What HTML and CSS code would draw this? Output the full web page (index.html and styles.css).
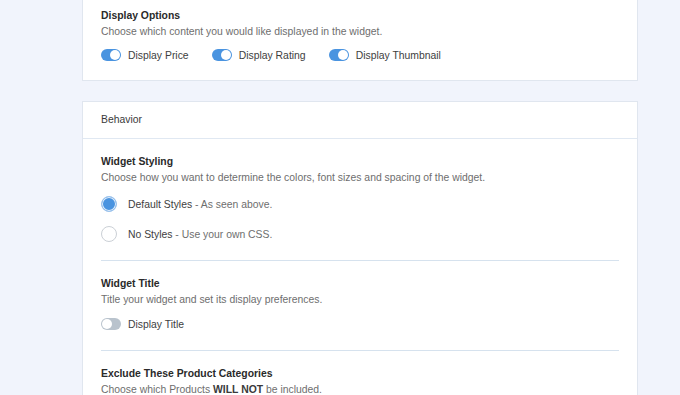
FILE: index.html
```html
<!DOCTYPE html>
<html>
<head>
<meta charset="utf-8">
<link rel="stylesheet" href="styles.css">
</head>
<body>
<div class="page">
  <div class="card card-first">
    <div class="section section-top">
      <div class="title">Display Options</div>
      <div class="desc">Choose which content you would like displayed in the widget.</div>
      <div class="toggles">
        <label class="opt"><span class="toggle on"><span class="knob"></span></span>Display Price</label>
        <label class="opt"><span class="toggle on"><span class="knob"></span></span>Display Rating</label>
        <label class="opt"><span class="toggle on"><span class="knob"></span></span>Display Thumbnail</label>
      </div>
    </div>
  </div>

  <div class="card">
    <div class="card-header">Behavior</div>
    <div class="card-body">
      <div class="section">
        <div class="title">Widget Styling</div>
        <div class="desc">Choose how you want to determine the colors, font sizes and spacing of the widget.</div>
        <div class="radios">
          <label class="opt radio-opt"><span class="radio checked"></span><span class="lbl">Default Styles</span><span class="hint">&nbsp;- As seen above.</span></label>
          <label class="opt radio-opt"><span class="radio"></span><span class="lbl">No Styles</span><span class="hint">&nbsp;- Use your own CSS.</span></label>
        </div>
      </div>
      <div class="section">
        <div class="title">Widget Title</div>
        <div class="desc">Title your widget and set its display preferences.</div>
        <div class="toggles">
          <label class="opt"><span class="toggle"><span class="knob"></span></span>Display Title</label>
        </div>
      </div>
      <div class="section last">
        <div class="title">Exclude These Product Categories</div>
        <div class="desc">Choose which Products <b>WILL NOT</b> be included.</div>
      </div>
    </div>
  </div>
</div>
</body>
</html>
```

FILE: styles.css
```css
html, body {
  margin: 0;
  padding: 0;
  background: #f1f4fc;
  font-family: "Liberation Sans", Arial, sans-serif;
  font-size: 10.4px;
  color: #444;
  overflow: hidden;
}

.page {
  padding-left: 82px;
  display: flex;
  flex-direction: column;
  gap: 20px;
}

.card {
  width: 556px;
  box-sizing: border-box;
  background: #fff;
  border: 1px solid #e0e6ef;
}

.card-first {
  border-top: 0;
}

.section {
  padding: 15px 0 16px;
  margin: 0 18px;
  border-bottom: 1px solid #d6e2ee;
}

.section-top {
  padding-top: 8px;
  padding-bottom: 15px;
  border-bottom: 0;
}

.section.last {
  border-bottom: 0;
}

.card-header {
  padding: 10px 18px 11px;
  line-height: 15px;
  color: #3a3a3a;
  border-bottom: 1px solid #e0e8f2;
}

.title {
  font-weight: bold;
  line-height: 16px;
  color: #2a2a2a;
}

.desc {
  line-height: 15px;
  color: #6e6e6e;
}

.desc b {
  color: #3a3a3a;
}

.toggles {
  display: flex;
  gap: 23px;
  margin-top: 6px;
}

.section:not(.section-top) .toggles {
  margin-top: 7px;
}

.opt {
  display: flex;
  align-items: center;
  height: 20px;
  color: #3e3e3e;
}

.toggle {
  width: 20px;
  height: 12px;
  border-radius: 6px;
  background: #b9c3cd;
  display: flex;
  align-items: center;
  justify-content: flex-start;
  padding: 0 1px;
  box-sizing: border-box;
  margin-right: 7px;
}

.toggle.on {
  background: #4a94e0;
  justify-content: flex-end;
}

.knob {
  width: 10px;
  height: 10px;
  border-radius: 50%;
  background: #fff;
}

.radios {
  display: flex;
  flex-direction: column;
  gap: 10px;
  margin-top: 9px;
}

.radio {
  width: 16px;
  height: 16px;
  box-sizing: border-box;
  border-radius: 50%;
  border: 1px solid #cbd0d6;
  background: #fff;
  margin-right: 11px;
}

.radio.checked {
  border-color: #9ec4ec;
  background: #4a94e0;
  box-shadow: inset 0 0 0 1px #e6f0fb;
}

.hint {
  color: #6e6e6e;
}
```
